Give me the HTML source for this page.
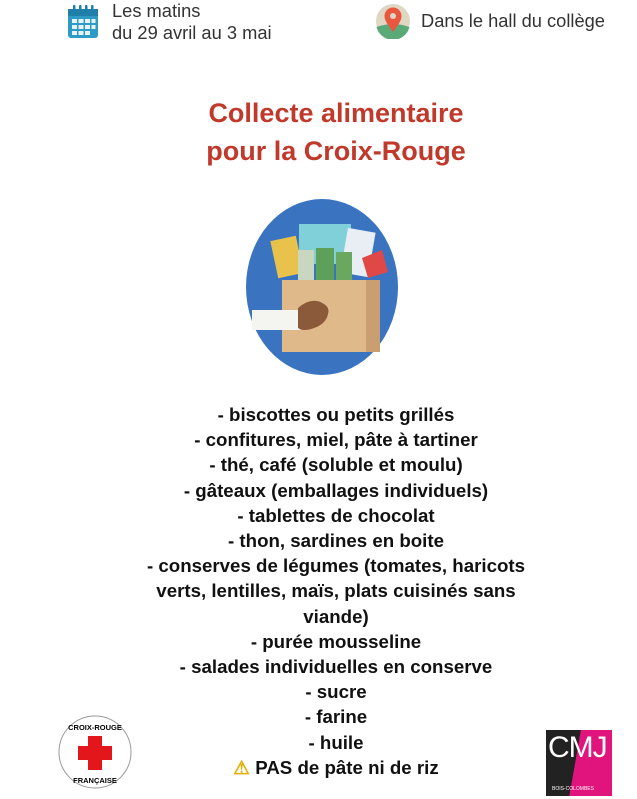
<!DOCTYPE html>
<html><head><meta charset="utf-8"><style>
body{margin:0;width:637px;height:799px;background:#fff;position:relative;overflow:hidden;font-family:"Liberation Sans",sans-serif;}
.a{position:absolute;}
.t{color:#333;font-size:18.3px;line-height:22px;}
h1{position:absolute;left:0;width:672px;top:94px;margin:0;text-align:center;color:#c0392b;font-size:27px;line-height:38px;font-weight:bold;}
.list{position:absolute;left:0;width:672px;top:402px;text-align:center;font-size:18.7px;font-weight:bold;line-height:25.2px;color:#111;}
</style></head><body>
<svg class="a" style="left:66px;top:4px" width="34" height="36" viewBox="0 0 34 36">
<rect x="2" y="5" width="30" height="29" rx="3" fill="#2e9ac6"/>
<rect x="2" y="5" width="30" height="7" fill="#1f7fa8"/>
<g fill="#e6f4fa"><rect x="6" y="15" width="5" height="4"/><rect x="12.5" y="15" width="5" height="4"/><rect x="19" y="15" width="5" height="4"/><rect x="25.5" y="15" width="4" height="4"/>
<rect x="6" y="21" width="5" height="4"/><rect x="12.5" y="21" width="5" height="4"/><rect x="19" y="21" width="5" height="4"/><rect x="25.5" y="21" width="4" height="4"/>
<rect x="6" y="27" width="5" height="4"/><rect x="12.5" y="27" width="5" height="4"/><rect x="19" y="27" width="5" height="4"/></g>
<g fill="#1f7fa8"><rect x="7" y="1" width="2.5" height="7" rx="1"/><rect x="13" y="1" width="2.5" height="7" rx="1"/><rect x="19" y="1" width="2.5" height="7" rx="1"/><rect x="25" y="1" width="2.5" height="7" rx="1"/></g>
</svg>
<div class="a t" style="left:112px;top:0px">Les matins<br>du 29 avril au 3 mai</div>
<svg class="a" style="left:375px;top:3px" width="36" height="36" viewBox="0 0 36 36">
<circle cx="18" cy="18" r="17" fill="#ddd7c3"/>
<path d="M1.5 24 Q18 18 34.5 24 A17 17 0 0 1 1.5 24Z" fill="#5aaa78"/>
<path d="M18 29 C12 21 9.5 17 9.5 13 A8.5 8.5 0 0 1 26.5 13 C26.5 17 24 21 18 29Z" fill="#e9573f"/>
<circle cx="18" cy="13" r="3" fill="#ddd7c3"/>
</svg>
<div class="a t" style="left:421px;top:10px">Dans le hall du collège</div>
<h1>Collecte alimentaire<br>pour la Croix-Rouge</h1>
<svg class="a" style="left:244px;top:198px" width="156" height="178" viewBox="0 0 156 178">
<ellipse cx="78" cy="89" rx="76" ry="88" fill="#3a73c0"/>
<rect x="30" y="40" width="26" height="38" fill="#e8c24a" transform="rotate(-12 43 59)"/>
<rect x="55" y="26" width="52" height="40" fill="#7fd0d8"/>
<rect x="100" y="32" width="28" height="45" fill="#e9eef5" transform="rotate(10 114 54)"/>
<path d="M118 60 l20 -8 l6 22 l-20 6z" fill="#e04848"/>
<rect x="54" y="52" width="16" height="30" fill="#c9d6c0"/><rect x="72" y="50" width="18" height="32" fill="#5da05a"/><rect x="92" y="54" width="16" height="28" fill="#6aa860"/>
<rect x="38" y="82" width="84" height="72" fill="#e0b98b"/>
<rect x="122" y="82" width="14" height="72" fill="#c99e70"/>
<rect x="8" y="112" width="48" height="20" fill="#f4f4f0"/>
<path d="M54 110 q14 -12 26 -4 q6 4 4 10 q-2 10 -14 14 q-10 4 -16 0z" fill="#8a5a3a"/>
</svg>
<div class="list">- biscottes ou petits grillés<br>- confitures, miel, pâte à tartiner<br>- thé, café (soluble et moulu)<br>- gâteaux (emballages individuels)<br>- tablettes de chocolat<br>- thon, sardines en boite<br>- conserves de légumes (tomates, haricots<br>verts, lentilles, maïs, plats cuisinés sans<br>viande)<br>- purée mousseline<br>- salades individuelles en conserve<br>- sucre<br>- farine<br>- huile<br><span style="color:#e3b000">⚠</span> PAS de pâte ni de riz</div>
<svg class="a" style="left:57px;top:714px" width="76" height="76" viewBox="0 0 76 76">
<circle cx="38" cy="38" r="36" fill="#fff" stroke="#999" stroke-width="1"/>
<path d="M31 22h14v10h10v14h-10v10h-14v-10h-10v-14h10z" fill="#e3161b"/>
<text x="38" y="16" font-size="7.5" font-weight="bold" text-anchor="middle" font-family="Liberation Sans">CROIX-ROUGE</text>
<text x="38" y="69" font-size="7.5" font-weight="bold" text-anchor="middle" font-family="Liberation Sans">FRANÇAISE</text>
</svg>
<div class="a" style="left:546px;top:730px;width:66px;height:66px;background:linear-gradient(100deg,#222 0 45%,#e0147c 45%)"></div>
<div class="a" style="left:548px;top:731px;color:#fff;font-size:30px;line-height:34px;font-family:'Liberation Sans Narrow','Liberation Sans',sans-serif;letter-spacing:-1px">CMJ</div>
<div class="a" style="left:552px;top:786px;color:#fff;font-size:5px">BOIS-COLOMBES</div>
</body></html>
